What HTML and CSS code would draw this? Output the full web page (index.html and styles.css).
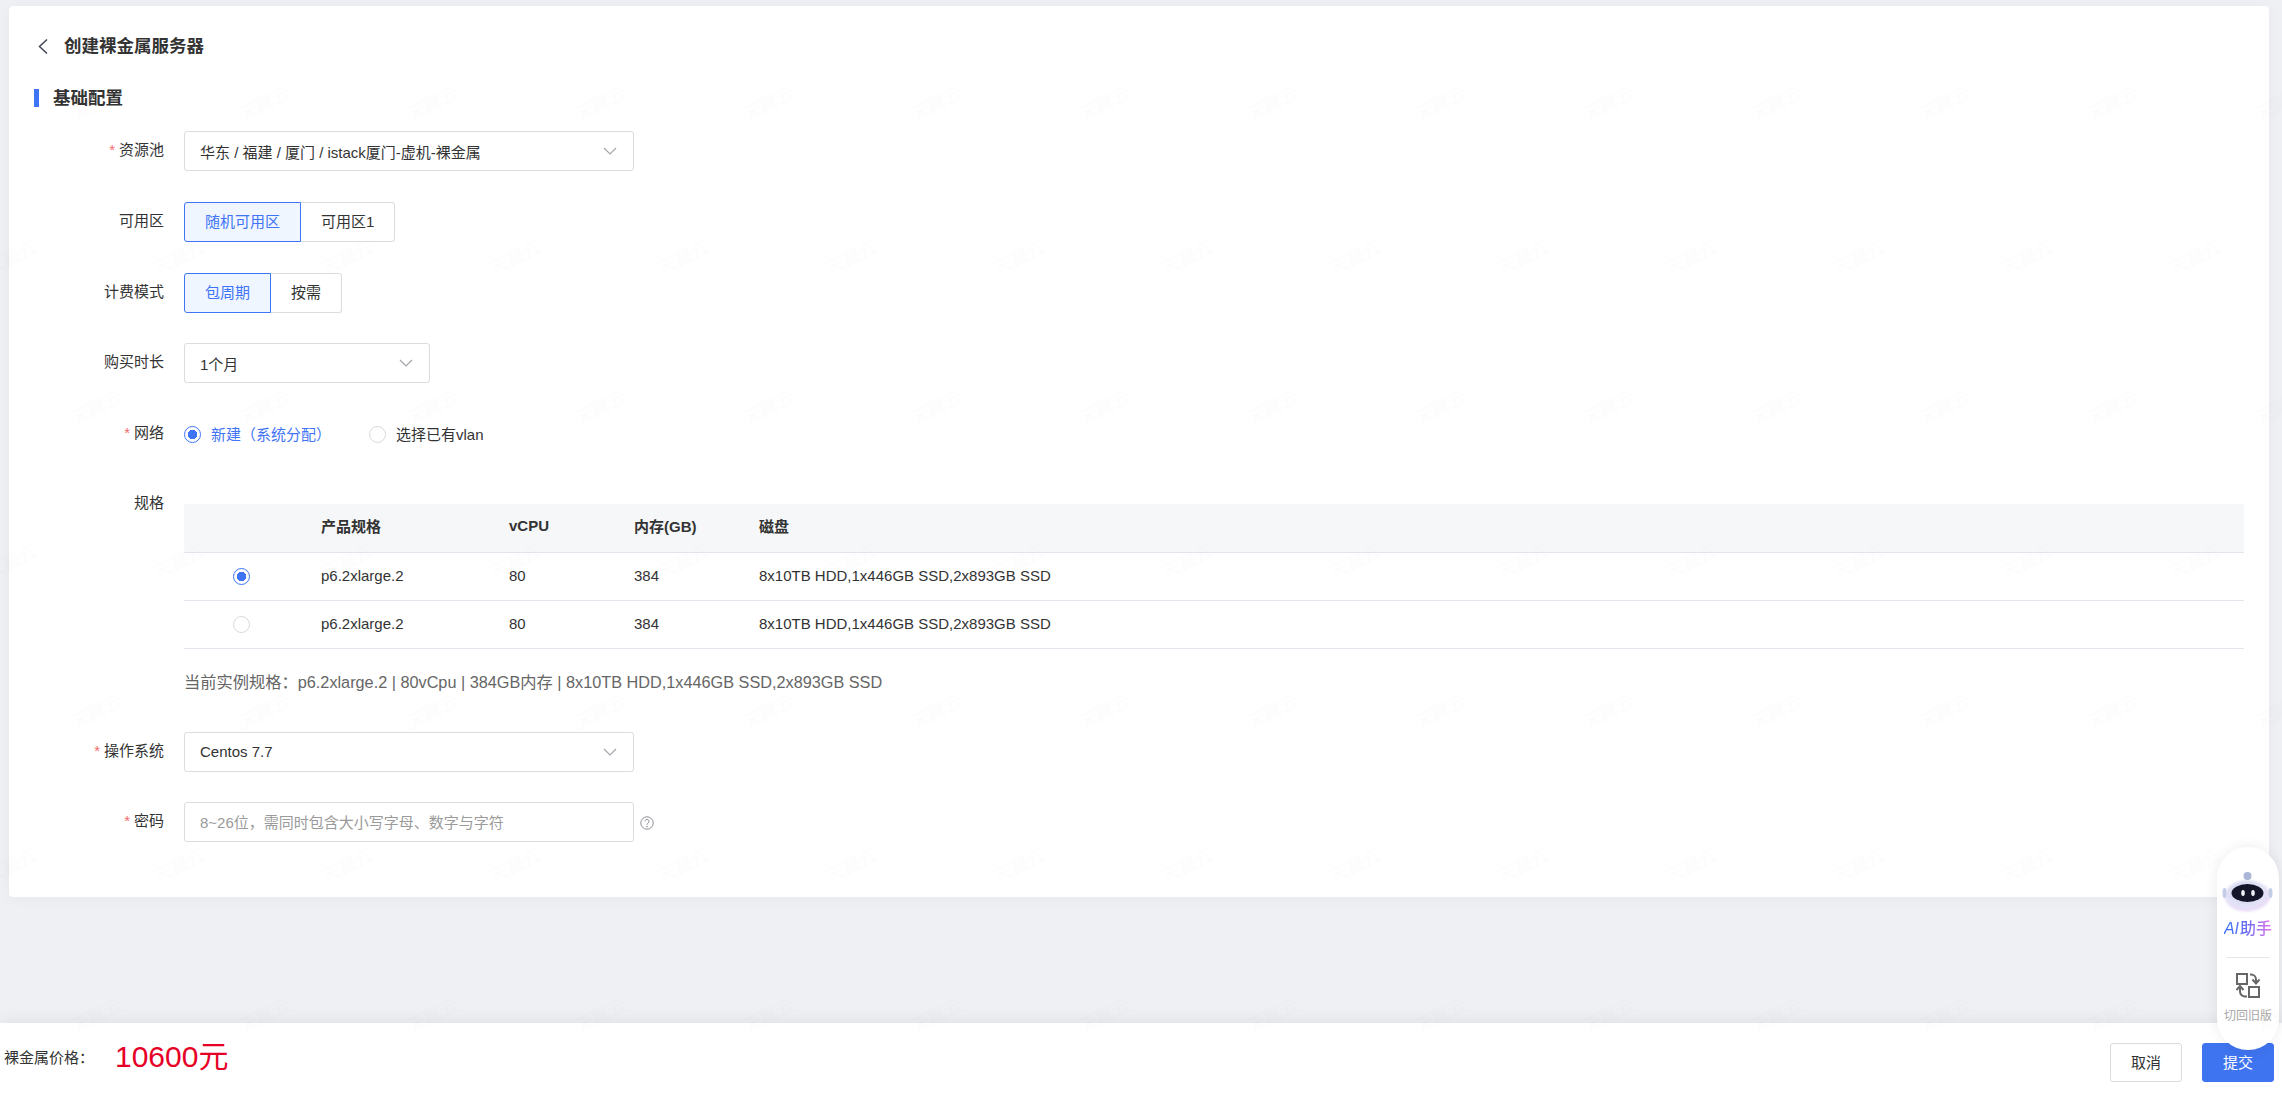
FILE: index.html
```html
<!DOCTYPE html>
<html lang="zh-CN">
<head>
  <meta charset="UTF-8">
  <title>创建裸金属服务器</title>
  <link rel="stylesheet" href="styles.css">
</head>
<body>
  <main class="page">
    <div class="card">
      <div class="title-bar">
        <svg class="back" width="12" height="17" viewBox="0 0 12 17"><path d="M10 1.5 2.5 8.5 10 15.5" fill="none" stroke="#3f4656" stroke-width="1.5"/></svg>
        <h1>创建裸金属服务器</h1>
      </div>
      <h2 class="section">基础配置</h2>

      <div class="row">
        <label class="label"><span class="req">*</span>资源池</label>
        <div class="select wide">
          <span>华东 / 福建 / 厦门 / istack厦门-虚机-裸金属</span>
          <svg class="arrow" width="14" height="8" viewBox="0 0 14 8"><path d="M1 1l6 6 6-6" fill="none" stroke="#a3a6ad" stroke-width="1.2"/></svg>
        </div>
      </div>

      <div class="row">
        <label class="label">可用区</label>
        <div class="btn-group">
          <span class="opt active">随机可用区</span><span class="opt">可用区1</span>
        </div>
      </div>

      <div class="row">
        <label class="label">计费模式</label>
        <div class="btn-group">
          <span class="opt active">包周期</span><span class="opt">按需</span>
        </div>
      </div>

      <div class="row">
        <label class="label">购买时长</label>
        <div class="select narrow">
          <span>1个月</span>
          <svg class="arrow" width="14" height="8" viewBox="0 0 14 8"><path d="M1 1l6 6 6-6" fill="none" stroke="#a3a6ad" stroke-width="1.2"/></svg>
        </div>
      </div>

      <div class="row row-network">
        <label class="label"><span class="req">*</span>网络</label>
        <div class="radios">
          <span class="radio-item on"><i class="radio checked"></i>新建（系统分配）</span>
          <span class="radio-item"><i class="radio"></i>选择已有vlan</span>
        </div>
      </div>

      <div class="row row-spec">
        <label class="label">规格</label>
        <div class="spec">
          <table class="spec-table">
            <colgroup><col class="c1"><col class="c2"><col class="c3"><col class="c4"><col></colgroup>
            <thead>
              <tr><th></th><th>产品规格</th><th>vCPU</th><th>内存(GB)</th><th>磁盘</th></tr>
            </thead>
            <tbody>
              <tr><td class="pick"><i class="radio checked"></i></td><td>p6.2xlarge.2</td><td>80</td><td>384</td><td>8x10TB HDD,1x446GB SSD,2x893GB SSD</td></tr>
              <tr><td class="pick"><i class="radio"></i></td><td>p6.2xlarge.2</td><td>80</td><td>384</td><td>8x10TB HDD,1x446GB SSD,2x893GB SSD</td></tr>
            </tbody>
          </table>
          <p class="summary">当前实例规格：p6.2xlarge.2 | 80vCpu | 384GB内存 | 8x10TB HDD,1x446GB SSD,2x893GB SSD</p>
        </div>
      </div>

      <div class="row row-os">
        <label class="label"><span class="req">*</span>操作系统</label>
        <div class="select wide">
          <span>Centos 7.7</span>
          <svg class="arrow" width="14" height="8" viewBox="0 0 14 8"><path d="M1 1l6 6 6-6" fill="none" stroke="#a3a6ad" stroke-width="1.2"/></svg>
        </div>
      </div>

      <div class="row last">
        <label class="label"><span class="req">*</span>密码</label>
        <div class="select wide placeholder">
          <span>8~26位，需同时包含大小写字母、数字与字符</span>
        </div>
        <svg class="help" width="14" height="14" viewBox="0 0 14 14"><circle cx="7" cy="7" r="6.2" fill="none" stroke="#8c8f96"/><path d="M5 5.4a2 2 0 1 1 3.2 1.6c-.8.5-1.2.9-1.2 1.7" fill="none" stroke="#8c8f96"/><circle cx="7" cy="10.6" r=".8" fill="#8c8f96"/></svg>
      </div>
    </div>
  </main>

  <footer class="bottom">
    <div class="price">
      <span class="price-label">裸金属价格：</span>
      <span class="price-value">10600元</span>
    </div>
    <div class="actions">
      <span class="btn">取消</span>
      <span class="btn primary">提交</span>
    </div>
  </footer>

  <aside class="helper">
    <svg class="robot" width="52" height="48" viewBox="0 0 52 48">
      <defs>
        <radialGradient id="head" cx="45%" cy="40%" r="62%">
          <stop offset="0%" stop-color="#c3c8e8"/>
          <stop offset="65%" stop-color="#e2e3f6"/>
          <stop offset="88%" stop-color="#e9dcf8"/>
          <stop offset="100%" stop-color="#faf6fe"/>
        </radialGradient>
        <filter id="soft" x="-20%" y="-20%" width="140%" height="140%">
          <feGaussianBlur stdDeviation="1.2"/>
        </filter>
      </defs>
      <ellipse cx="25.5" cy="28" rx="23" ry="16" fill="url(#head)" filter="url(#soft)"/>
      <circle cx="25.5" cy="8" r="4" fill="#a9b6d6"/>
      <ellipse cx="2.5" cy="25" rx="2" ry="5" fill="#c3cde6"/>
      <ellipse cx="48.5" cy="25" rx="2" ry="5" fill="#c3cde6"/>
      <ellipse cx="25.5" cy="25" rx="16" ry="9" fill="#15152a"/>
      <ellipse cx="21" cy="25" rx="1.8" ry="3" fill="#f2f2fa"/>
      <ellipse cx="31" cy="25" rx="1.8" ry="3" fill="#f2f2fa"/>
    </svg>
    <span class="ai-name"><em>AI</em>助手</span>
    <hr class="helper-line">
    <svg class="switch" width="24" height="25" viewBox="0 0 24 25" fill="none" stroke="#666" stroke-width="2">
      <rect x="1" y="1" width="10" height="10"/>
      <rect x="13" y="14" width="10" height="10"/>
      <path d="M14 1.5h1a5 5 0 0 1 5 5V9"/>
      <path d="M16.5 6.5 20 10.5l3.5-4"/>
      <path d="M11 23.5h-2a5 5 0 0 1-5-5V15"/>
      <path d="M.5 17 4 13l3.5 4"/>
    </svg>
    <span class="old-ver">切回旧版</span>
  </aside>

  <svg class="watermark" width="2282" height="1094">
    <defs>
      <pattern id="wm" width="168" height="304" patternUnits="userSpaceOnUse">
        <text x="96" y="110" transform="rotate(-26 96 103)" class="wm-text">天翼云</text>
        <text x="11" y="264" transform="rotate(-26 11 257)" class="wm-text">天翼云</text>
        <text x="179" y="264" transform="rotate(-26 179 257)" class="wm-text">天翼云</text>
      </pattern>
    </defs>
    <rect width="2282" height="1094" fill="url(#wm)"/>
  </svg>
</body>
</html>
```

FILE: styles.css
```css
* {
  box-sizing: border-box;
}
html, body {
  height: 100%;
}
body {
  margin: 0;
  display: flex;
  flex-direction: column;
  overflow: hidden;
  background-color: #eff0f4;
  color: #333;
  font-family: "Liberation Sans", "Noto Sans CJK SC", sans-serif;
  font-size: 15px;
}
.page {
  flex: 1;
  padding: 6px 13px 0 9px;
}
.card {
  height: 891px;
  padding: 30px 25px 0;
  border-radius: 4px;
  background-color: #fff;
  box-shadow: 0 2px 14px rgba(0, 0, 0, 0.04);
}
.title-bar {
  display: flex;
  align-items: center;
  height: 20px;
  margin-bottom: 33px;
}
.back {
  margin: 0 15px 0 3px;
}
h1 {
  margin: 0;
  font-size: 17.5px;
  line-height: 20px;
  font-weight: bold;
}
.section {
  height: 18px;
  margin: 0 0 24px;
  border-left: 5px solid #3f74f6;
  font-size: 17.5px;
  line-height: 19px;
  font-weight: bold;
  text-indent: 14px;
}
.row {
  display: flex;
  align-items: flex-start;
  margin-bottom: 30.75px;
}
.row-network {
  margin-bottom: 29px;
}
.row-spec {
  margin-bottom: 30px;
}
.row-os {
  margin-bottom: 30px;
}
.label {
  flex: none;
  width: 130px;
  margin-right: 20px;
  text-align: right;
  line-height: 38px;
  color: #333;
}
.row-spec .label {
  line-height: 40px;
}
.req {
  margin-right: 4px;
  color: #f56c6c;
}
.select {
  display: flex;
  align-items: center;
  justify-content: space-between;
  height: 40px;
  padding: 0 16px 0 15px;
  border: 1px solid #dcdcdf;
  border-radius: 3px;
  background-color: #fff;
}
.wide {
  width: 450px;
}
.narrow {
  width: 246px;
}
.placeholder {
  color: #9a9a9a;
}
.help {
  margin: 14px 0 0 6px;
}
.btn-group {
  display: flex;
}
.opt {
  height: 40px;
  padding: 0 20px;
  border: 1px solid #dcdcdf;
  border-left: none;
  line-height: 38px;
}
.opt:last-child {
  border-radius: 0 3px 3px 0;
}
.opt.active {
  border: 1px solid #3f74f6;
  border-radius: 3px 0 0 3px;
  background-color: #f0f6ff;
  color: #3f74f6;
}
.radios {
  display: flex;
  align-items: center;
  height: 40px;
}
.radio-item {
  display: flex;
  align-items: center;
  gap: 10px;
  margin-right: 38px;
  padding-bottom: 2px;
}
.radio-item .radio {
  margin-top: 2px;
}
.radio-item.on {
  color: #3f74f6;
}
.radio {
  display: block;
  width: 17px;
  height: 17px;
  border: 1px solid #d9d9d9;
  border-radius: 50%;
  background-color: #fff;
}
.radio.checked {
  border-color: #3f74f6;
  background: radial-gradient(circle, #3f74f6 0 4.5px, #fff 5px);
}
.spec {
  flex: 1;
  margin-top: 21px;
}
.spec-table {
  width: 100%;
  border-collapse: collapse;
  table-layout: fixed;
}
.c1 {
  width: 121px;
}
.c2 {
  width: 188px;
}
.c3, .c4 {
  width: 125px;
}
.spec-table th, .spec-table td {
  height: 48px;
  padding: 0 16px 2px;
  border-bottom: 1px solid #e4e5ec;
  text-align: left;
}
.spec-table th {
  padding-bottom: 4px;
  background-color: #f6f7f9;
  font-weight: bold;
}
.spec-table td.pick {
  padding: 0 0 0 49px;
}
.summary {
  margin: 13px 0 0;
  font-size: 16.25px;
  line-height: 40px;
  color: #666;
}
.bottom {
  flex: none;
  position: relative;
  display: flex;
  align-items: center;
  justify-content: space-between;
  height: 71px;
  padding: 0 8px 0 4px;
  background-color: #fff;
  box-shadow: 0 -3px 14px rgba(0, 0, 0, 0.06);
}
.price {
  display: flex;
  align-items: center;
  margin-top: -4px;
}
.price-label {
  width: 111px;
}
.price-value {
  padding-bottom: 6px;
  font-size: 30px;
  color: #e60026;
}
.actions {
  display: flex;
  gap: 20px;
  margin-top: 8px;
}
.btn {
  width: 72px;
  height: 39px;
  border: 1px solid #dcdcdf;
  border-radius: 3px;
  background-color: #fff;
  text-align: center;
  line-height: 37px;
}
.btn.primary {
  border-color: #3f74f0;
  background-color: #3f74f0;
  color: #fff;
}
.helper {
  position: absolute;
  top: 847px;
  right: 3px;
  display: flex;
  flex-direction: column;
  align-items: center;
  width: 62px;
  height: 203px;
  padding-top: 21px;
  border-radius: 31px;
  background-color: #fff;
  box-shadow: 0 0 14px rgba(0, 0, 0, 0.08);
}
.robot {
  display: block;
}
.ai-name {
  margin-top: 4px;
  background: linear-gradient(90deg, #2b6cf6, #6a6cf0 45%, #e472ee);
  -webkit-background-clip: text;
  background-clip: text;
  color: transparent;
  font-size: 16px;
  line-height: 18px;
  font-weight: 500;
}
.ai-name em {
  margin-right: 1px;
  font-style: italic;
}
.helper-line {
  width: 42px;
  margin: 19px 0 15px;
  border: none;
  border-top: 1px solid #e4e4e4;
}
.switch {
  display: block;
}
.old-ver {
  margin-top: 11px;
  color: #a8a8a8;
  font-size: 12px;
  line-height: 14px;
}
.watermark {
  position: absolute;
  top: 0;
  left: 0;
  pointer-events: none;
}
.wm-text {
  fill: rgba(0, 0, 0, 0.013);
  font-size: 18px;
  text-anchor: middle;
}
```
